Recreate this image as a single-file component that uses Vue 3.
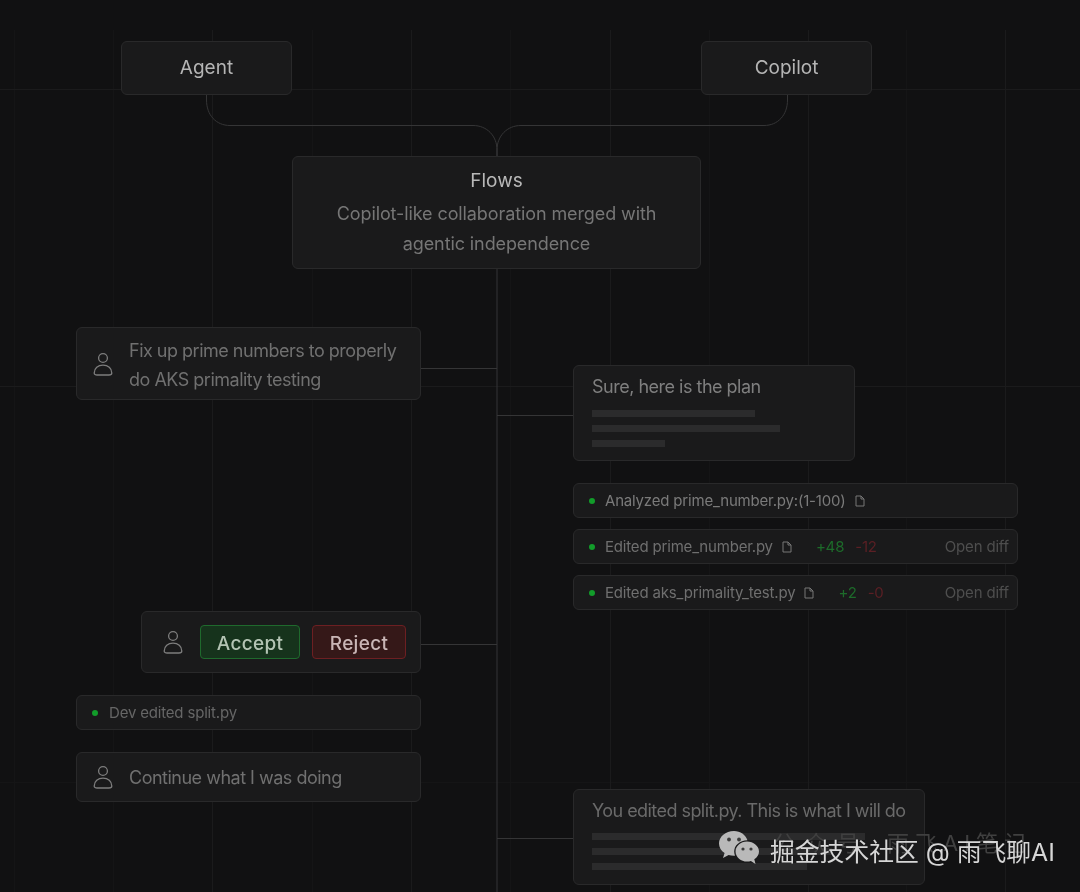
<template>
  <div class="stage">
    <!-- grid and connectors -->
    <svg class="wires" width="1080" height="892" viewBox="0 0 1080 892" fill="none">
      <g stroke="#151516" stroke-width="1">
        <path v-for="x in faintX" :key="'x' + x" :d="`M${x} 30V892`" />
        <path d="M0 782.5H1080" />
      </g>
      <g stroke="#1b1b1c" stroke-width="1">
        <path v-for="x in gridX" :key="x" :d="`M${x} 30V892`" />
        <path d="M0 89.5H1080M0 386.5H1080" />
      </g>
      <g stroke="#353536" stroke-width="1">
        <path d="M206.5 95V100C206.5 115 216 125.5 230 125.5H473C487 125.5 497 136 497 150V156" />
        <path d="M787.5 95V100C787.5 115 778 125.5 764 125.5H521C507 125.5 497 136 497 150V156" />
        <path d="M497 269V892" />
        <path d="M421 368.5H497M497 415.5H573M421 644.5H497M497 838.5H573" />
      </g>
    </svg>

    <div class="node mode agent">Agent</div>
    <div class="node mode copilot">Copilot</div>

    <div class="node flows">
      <div class="flows-title">Flows</div>
      <p>Copilot-like collaboration merged with<br />agentic independence</p>
    </div>

    <div class="node user fix">
      <svg class="person" viewBox="0 0 20 24" fill="none" stroke="#7d7d7d" stroke-width="1.3">
        <circle cx="10" cy="6" r="4.4" />
        <path d="M1.2 21C1.2 16.3 5 13.2 10 13.2S18.8 16.3 18.8 21C18.8 22.4 17.5 23 16 23H4C2.5 23 1.2 22.4 1.2 21Z" />
      </svg>
      <span class="fix-text">Fix up prime numbers to properly<br />do AKS primality testing</span>
    </div>

    <div class="node reply plan">
      <div class="reply-title">Sure, here is the plan</div>
      <div class="bars">
        <i class="w163"></i>
        <i class="w188"></i>
        <i class="w73"></i>
      </div>
    </div>

    <div class="node step row1">
      <b class="dot"></b>
      <span>Analyzed prime_number.py:(1-100)</span>
      <svg class="file" viewBox="0 0 10 12" fill="none" stroke="#777" stroke-width="1">
        <path d="M1 1H6L9 4V11H1ZM6 1V4H9" />
      </svg>
    </div>
    <div class="node step row2">
      <b class="dot"></b>
      <span>Edited prime_number.py</span>
      <svg class="file" viewBox="0 0 10 12" fill="none" stroke="#777" stroke-width="1">
        <path d="M1 1H6L9 4V11H1ZM6 1V4H9" />
      </svg>
      <span class="added first">+48</span>
      <span class="removed">-12</span>
      <span class="open">Open diff</span>
    </div>
    <div class="node step row3">
      <b class="dot"></b>
      <span>Edited aks_primality_test.py</span>
      <svg class="file" viewBox="0 0 10 12" fill="none" stroke="#777" stroke-width="1">
        <path d="M1 1H6L9 4V11H1ZM6 1V4H9" />
      </svg>
      <span class="added first">+2</span>
      <span class="removed">-0</span>
      <span class="open">Open diff</span>
    </div>

    <div class="node user decide">
      <svg class="person" viewBox="0 0 20 24" fill="none" stroke="#7d7d7d" stroke-width="1.3">
        <circle cx="10" cy="6" r="4.4" />
        <path d="M1.2 21C1.2 16.3 5 13.2 10 13.2S18.8 16.3 18.8 21C18.8 22.4 17.5 23 16 23H4C2.5 23 1.2 22.4 1.2 21Z" />
      </svg>
      <button class="btn accept">Accept</button>
      <button class="btn reject">Reject</button>
    </div>

    <div class="node step dev">
      <b class="dot"></b>
      <span>Dev edited split.py</span>
    </div>

    <div class="node user cont">
      <svg class="person" viewBox="0 0 20 24" fill="none" stroke="#7d7d7d" stroke-width="1.3">
        <circle cx="10" cy="6" r="4.4" />
        <path d="M1.2 21C1.2 16.3 5 13.2 10 13.2S18.8 16.3 18.8 21C18.8 22.4 17.5 23 16 23H4C2.5 23 1.2 22.4 1.2 21Z" />
      </svg>
      <span>Continue what I was doing</span>
    </div>

    <div class="node reply final">
      <div class="reply-title small">You edited split.py. This is what I will do</div>
      <div class="bars">
        <i class="w273"></i>
        <i class="w240"></i>
        <i class="w215"></i>
      </div>
    </div>

    <!-- watermark over the last card -->
    <div class="ghost">
      <span class="ghost-a">公众号</span>
      <span class="ghost-b">雨飞AI笔记</span>
    </div>
    <div class="mark">
      <svg class="wechat" viewBox="0 0 42 36">
        <path d="M16 1C7.5 1 1 6.6 1 13.5C1 17.5 3.2 20.8 6.6 23L5 28L10.6 25C12.3 25.5 14 25.8 16 25.8L17 25.7C16.4 24.4 16.1 23 16.1 21.6C16.1 15.4 21.8 10.4 29.4 10.2C27.7 4.9 22.4 1 16 1Z" fill="#b9b9b9" />
        <path d="M41 21.5C41 15.8 35.4 11.4 29 11.4S17.6 15.8 17.6 21.5S23 31.6 29 31.6C30.4 31.6 31.7 31.4 32.9 31L37.5 34L36.3 29.3C39.2 27.4 41 24.6 41 21.5Z" fill="#b9b9b9" />
        <g fill="#3c3c3c">
          <circle cx="11" cy="9.5" r="1.9" /><circle cx="21" cy="9.5" r="1.9" />
          <circle cx="25" cy="19" r="1.6" /><circle cx="33" cy="19" r="1.6" />
        </g>
      </svg>
      <span class="mark-text">掘金技术社区 @ 雨飞聊AI</span>
    </div>
  </div>
</template>

<script setup>
// grid lines sit about 99px apart, every other one is a little brighter
const gridX = [212.5, 411.5, 610.5, 808.5, 1005.5]
const faintX = [14.5, 113.5, 312.5, 510.5, 709.5, 906.5]
</script>

<style>
body {
  background: #111112;
}
</style>

<style scoped>
.stage {
  position: relative;
  width: 1080px;
  height: 892px;
  overflow: hidden;
  background: #111112;
  font-family: Inter, "Noto Sans CJK SC", sans-serif;
  filter: blur(0.35px);
}

.wires {
  position: absolute;
  left: 0;
  top: 0;
}

.node {
  position: absolute;
  box-sizing: border-box;
  background: #1a1a1b;
  border: 1px solid #29292a;
  border-radius: 6px;
  color: #7d7d7d;
}

.mode {
  top: 41px;
  width: 171px;
  height: 54px;
  padding-bottom: 2px;
  display: flex;
  align-items: center;
  justify-content: center;
  font-size: 19px;
  color: #b5b5b5;
}

.agent {
  left: 121px;
}

.copilot {
  left: 701px;
}

.flows {
  left: 292px;
  top: 156px;
  width: 409px;
  height: 113px;
  text-align: center;
  padding-top: 12px;
}

.flows-title {
  font-size: 19px;
  line-height: 24px;
  color: #b8b8b8;
}

.flows p {
  margin: 6px 0 0;
  font-size: 18px;
  line-height: 30px;
  letter-spacing: -0.1px;
  color: #767676;
}

.user {
  display: flex;
  align-items: center;
  font-size: 18px;
  letter-spacing: -0.5px;
  line-height: 29px;
  color: #707070;
}

.fix-text {
  padding-top: 2px;
}

.person {
  width: 20px;
  height: 24px;
  flex-shrink: 0;
}

.fix {
  left: 76px;
  top: 327px;
  width: 345px;
  height: 73px;
  padding-left: 16px;
  gap: 16px;
}

.cont {
  left: 76px;
  top: 752px;
  width: 345px;
  height: 50px;
  padding-left: 16px;
  gap: 16px;
}

.decide {
  left: 141px;
  top: 611px;
  width: 280px;
  height: 62px;
  padding-left: 21px;
  gap: 17px;
}

.btn {
  box-sizing: border-box;
  height: 34px;
  margin: 0;
  padding: 2px 0 0;
  border-radius: 4px;
  font: 500 19px Inter, sans-serif;
  letter-spacing: 0.3px;
}

.accept {
  width: 100px;
  background: #16331c;
  border: 1px solid #1f6a2d;
  color: #b4c4b4;
}

.reject {
  width: 94px;
  margin-left: -5px;
  background: #351818;
  border: 1px solid #6d1f22;
  color: #c9b6b6;
}

.reply {
  left: 573px;
  width: 282px;
  height: 96px;
  padding: 9px 18px 0;
}

.plan {
  top: 365px;
}

.final {
  top: 789px;
  width: 352px;
}

.reply-title {
  font-size: 18px;
  line-height: 24px;
  letter-spacing: -0.5px;
  color: #7f7f7f;
  white-space: nowrap;
}

.reply-title.small {
  color: #6a6a6a;
  line-height: 23px;
  letter-spacing: -0.55px;
}

.bars {
  display: flex;
  flex-direction: column;
  gap: 8px;
  margin-top: 11px;
}

.bars i {
  display: block;
  height: 7px;
  background: #2b2b2c;
}

.w163 {
  width: 163px;
}

.w188 {
  width: 188px;
}

.w73 {
  width: 73px;
}

.w273 {
  width: 273px;
}

.w240 {
  width: 240px;
}

.w215 {
  width: 215px;
}

.step {
  display: flex;
  align-items: center;
  height: 35px;
  font-size: 15px;
  letter-spacing: -0.18px;
  color: #6f6f6f;
}

.row1,
.row2,
.row3 {
  left: 573px;
  width: 445px;
  padding-left: 15px;
}

.row1 {
  top: 483px;
  color: #7a7a7a;
}

.row2 {
  top: 529px;
}

.row3 {
  top: 575px;
}

.dev {
  left: 76px;
  top: 695px;
  width: 345px;
  padding-left: 15px;
  color: #666;
}

.dot {
  width: 6px;
  height: 6px;
  border-radius: 50%;
  background: #129c2a;
  margin-right: 10px;
  flex-shrink: 0;
}

.dev .dot {
  margin-right: 11px;
}

.file {
  width: 10px;
  height: 12px;
  margin-left: 9px;
  flex-shrink: 0;
}

.added {
  color: #1d6b2a;
}

.removed {
  color: #5b1f24;
  margin-left: 11px;
}

.first {
  margin-left: 24px;
}

.open {
  margin-left: auto;
  margin-right: 8px;
  color: #4e4e4e;
}

.ghost {
  position: absolute;
  left: 773px;
  top: 827px;
  font-size: 22px;
  line-height: 32px;
  color: #404040;
  white-space: nowrap;
}

.ghost-a {
  letter-spacing: 10px;
}

.ghost-b {
  margin-left: 18px;
  letter-spacing: 6px;
}

.mark {
  position: absolute;
  left: 718px;
  top: 830px;
  display: flex;
  align-items: flex-start;
  gap: 10px;
  color: #d6d6d6;
  font-size: 24.8px;
  line-height: 36px;
  white-space: nowrap;
}

.mark-text {
  margin-top: 4px;
}

.wechat {
  width: 42px;
  height: 36px;
}
</style>
